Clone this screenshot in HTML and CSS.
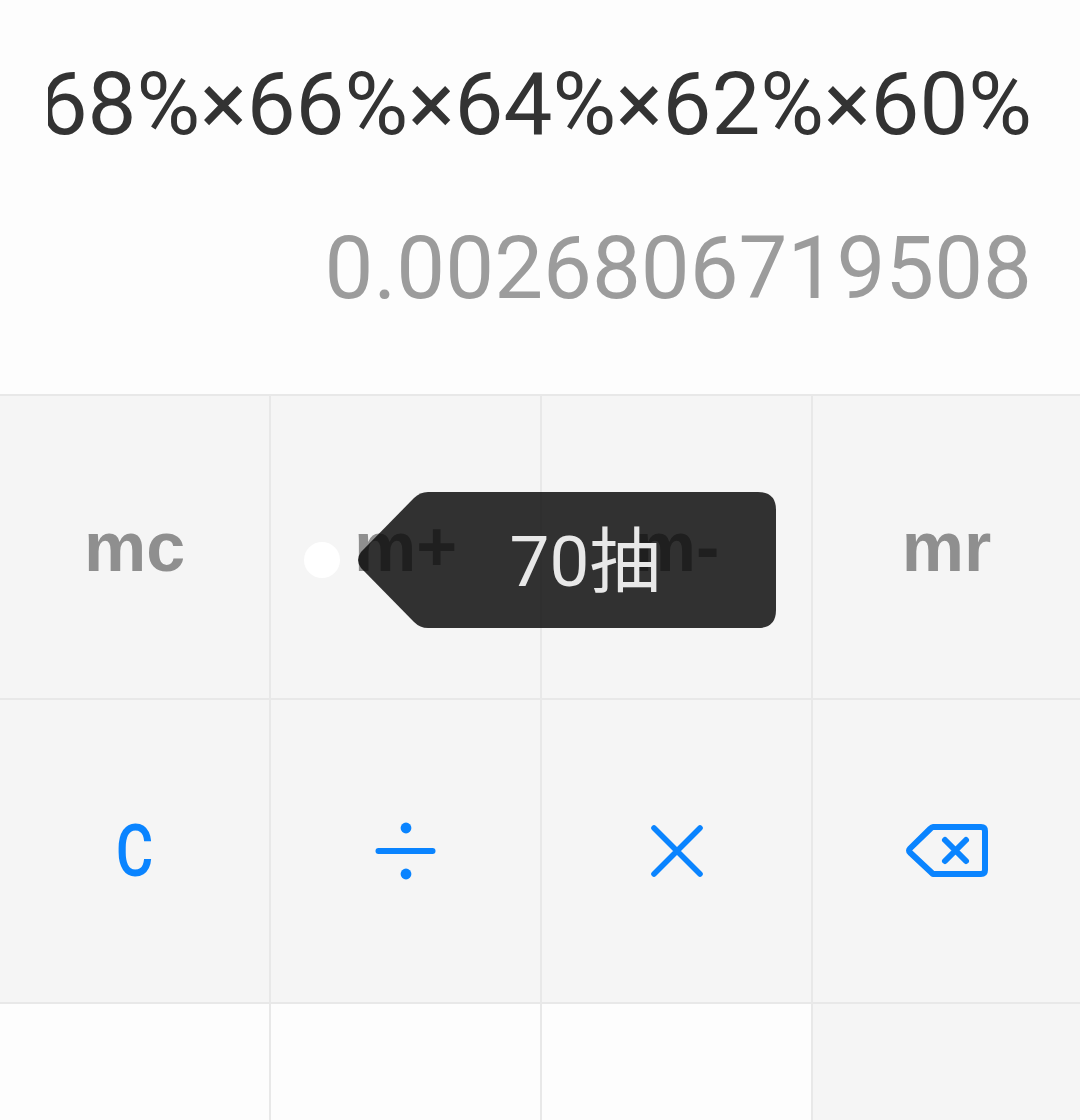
FILE: index.html
```html
<!DOCTYPE html>
<html lang="en">
<head>
    <meta charset="UTF-8">
    <title>Calculator</title>
    <meta name="viewport" content="width=device-width, initial-scale=1.0">
    <link rel="stylesheet" href="styles.css">
</head>
<body>

<div class="calc">
    <div class="display">
        <div class="expression"><span>68%×66%×64%×62%×60%</span></div>
        <div class="result">0.0026806719508</div>
    </div>

    <div class="keys">
        <div class="key func"><span class="mem">mc</span></div>
        <div class="key func"><span class="mem">m+</span></div>
        <div class="key func"><span class="mem">m-</span></div>
        <div class="key func"><span class="mem">mr</span></div>

        <div class="key func"><span class="clear">C</span></div>
        <div class="key func">
            <svg class="icon" width="64" height="64" viewBox="0 0 64 64" fill="none" stroke="#0a84ff" stroke-width="6" stroke-linecap="round">
                <path d="M4.5 32H58.5"/>
                <circle cx="32" cy="9" r="5.4" fill="#0a84ff" stroke="none"/>
                <circle cx="32" cy="55" r="5.4" fill="#0a84ff" stroke="none"/>
            </svg>
        </div>
        <div class="key func">
            <svg class="icon" width="64" height="64" viewBox="0 0 64 64" fill="none" stroke="#0a84ff" stroke-width="5.6" stroke-linecap="round">
                <path d="M9 9L55 55M55 9L9 55"/>
            </svg>
        </div>
        <div class="key func">
            <svg class="icon" width="84" height="60" viewBox="0 0 84 60" fill="none" stroke="#0a84ff" stroke-width="6" stroke-linecap="round" stroke-linejoin="round">
                <path d="M28 6H76Q80 6 80 10V49Q80 53 76 53H28L5 31.5Q3 29.5 5 27.5L25 8Q27 6 28 6Z"/>
                <path d="M40 19L61 40M61 19L40 40"/>
            </svg>
        </div>

        <div class="key"></div>
        <div class="key"></div>
        <div class="key"></div>
        <div class="key func"></div>
    </div>
</div>

<div class="dot"></div>
<div class="tag">
    <svg class="tag-shape" width="418" height="136" viewBox="0 0 418 136">
        <path d="M70 0H400Q418 0 418 18V118Q418 136 400 136H70Q62 136 56 130L3 76Q-3 68 3 60L56 6Q62 0 70 0Z"/>
    </svg>
    <span class="tag-text">70抽</span>
</div>

</body>
</html>
```

FILE: styles.css
```css
body {
    margin: 0;
    background-color: #fdfdfd;
    font-family: Roboto, 'Noto Sans CJK SC', sans-serif;
    overflow: hidden;
}

.calc {
    width: 1080px;
    height: 1120px;
    overflow: hidden;
}

.display {
    height: 394px;
    box-sizing: border-box;
    padding: 52px 48px 0 48px;
    text-align: right;
}

.expression {
    display: flex;
    justify-content: flex-end;
    overflow: hidden;
    height: 104px;
    line-height: 104px;
    font-size: 87px;
    color: #333;
    white-space: nowrap;
}

.result {
    margin-top: 60px;
    line-height: 104px;
    font-size: 87px;
    color: #9c9c9c;
    white-space: nowrap;
}

.keys {
    display: grid;
    grid-template-columns: 271px 271px 271px 267px;
    grid-auto-rows: 304px;
    border-top: 2px solid #e8e8e8;
}

.key {
    display: flex;
    align-items: center;
    justify-content: center;
    box-sizing: border-box;
    border-right: 2px solid #e8e8e8;
    border-bottom: 2px solid #e8e8e8;
}

.key:nth-child(4n) {
    border-right: none;
}

.func {
    background-color: #f5f5f5;
}

.mem {
    font-family: 'Liberation Sans', Arial, sans-serif;
    font-weight: 700;
    font-size: 70px;
    color: #8f8f8f;
}

.clear {
    font-size: 72px;
    font-weight: 500;
    color: #0a84ff;
    transform: scaleX(0.8);
}

/* popup marker over the keys */
.dot {
    position: absolute;
    left: 304px;
    top: 542px;
    width: 36px;
    height: 36px;
    border-radius: 50%;
    background-color: #fff;
}

.tag {
    position: absolute;
    left: 358px;
    top: 492px;
    width: 418px;
    height: 136px;
    display: flex;
    align-items: center;
    justify-content: center;
}

.tag-shape {
    position: absolute;
    left: 0;
    top: 0;
}

.tag-shape path {
    fill: rgba(6, 6, 6, 0.82);
}

.tag-text {
    position: relative;
    left: 18px;
    top: -5px;
    font-size: 71px;
    color: #e8e8e8;
}
```
